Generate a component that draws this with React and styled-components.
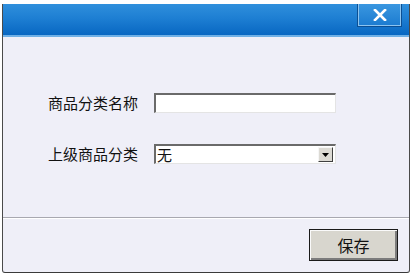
import React from 'react';
import styled, { createGlobalStyle } from 'styled-components';

const GlobalStyle = createGlobalStyle`
  html, body {
    margin: 0;
    padding: 0;
    background: #ffffff;
  }
  body {
    font-family: "Noto Sans CJK SC", "Liberation Sans", sans-serif;
  }
`;

const Page = styled.div`
  padding: 4px 0 0 2px;
`;

const Window = styled.div`
  width: 408px;
  height: 269px;
  display: flex;
  flex-direction: column;
  box-sizing: border-box;
  border-left: 1px solid #4a4a4a;
  border-right: 1px solid #4a4a4a;
  border-bottom: 1px solid #3a3a3a;
  border-radius: 0 0 3px 3px;
  background: #efeff8;
  overflow: hidden;
`;

const TitleBar = styled.div`
  height: 31px;
  flex-shrink: 0;
  display: flex;
  justify-content: flex-end;
  align-items: flex-start;
  padding-right: 7px;
  background: linear-gradient(to bottom, #2f8fdc 0%, #1e7fd3 45%, #0867c2 100%);
  border-bottom: 2px solid #6fb0e6;
`;

const CloseButton = styled.button`
  width: 45px;
  height: 23px;
  padding: 0;
  display: flex;
  align-items: center;
  justify-content: center;
  box-sizing: border-box;
  background: linear-gradient(to bottom, #3a97e0, #1b7bd0);
  border: 1px solid #0b4f93;
  border-top: none;
  box-shadow: inset 1px 0 0 #8cc4f0, inset -1px 0 0 #8cc4f0, inset 0 -1px 0 #8cc4f0;
`;

const Content = styled.div`
  flex: 1;
  display: flex;
  flex-direction: column;
  gap: 31px;
  padding: 56px 0 0 45px;
`;

const Row = styled.div`
  display: flex;
  align-items: center;
`;

const Label = styled.span`
  width: 106px;
  font-size: 15px;
  line-height: 20px;
  color: #111;
`;

const TextBox = styled.input`
  width: 182px;
  height: 20px;
  box-sizing: border-box;
  margin: 0;
  padding: 0 3px;
  background: #fff;
  border-top: 2px solid #6a6a6a;
  border-left: 2px solid #6a6a6a;
  border-right: 1px solid #e4e4e4;
  border-bottom: 1px solid #e4e4e4;
  outline: none;
  font-family: inherit;
  font-size: 15px;
`;

const Select = styled.div`
  width: 182px;
  height: 20px;
  box-sizing: border-box;
  display: flex;
  align-items: center;
  justify-content: space-between;
  background: #fff;
  border-top: 2px solid #6a6a6a;
  border-left: 2px solid #6a6a6a;
  border-right: 1px solid #e4e4e4;
  border-bottom: 1px solid #e4e4e4;
  font-size: 15px;
  color: #111;
  padding-left: 1px;
`;

const ArrowButton = styled.span`
  width: 15px;
  height: 15px;
  margin-right: 2px;
  box-sizing: border-box;
  display: flex;
  align-items: center;
  justify-content: center;
  background: #dcdad4;
  border-top: 1px solid #f6f6f6;
  border-left: 1px solid #f6f6f6;
  border-right: 1px solid #404040;
  border-bottom: 1px solid #404040;
`;

const Footer = styled.div`
  height: 55px;
  flex-shrink: 0;
  display: flex;
  justify-content: flex-end;
  align-items: flex-start;
  padding: 11px 11px 0 0;
  box-sizing: border-box;
  border-top: 1px solid #a8a8b0;
  box-shadow: inset 0 1px 0 #ffffff;
`;

const SaveButton = styled.button`
  width: 89px;
  height: 32px;
  box-sizing: border-box;
  background: #d8d6ce;
  border: 1px solid #1a1a1a;
  box-shadow: inset 1px 1px 0 #fafafa, inset -2px -2px 0 #7c7c7c;
  font-family: inherit;
  font-size: 16px;
  color: #111;
  padding: 0;
`;

const App = () => {
  return (
    <Page>
      <GlobalStyle />
      <Window>
        <TitleBar>
          <CloseButton>
            <svg width="14" height="12" viewBox="0 0 14 12">
              <path d="M2 1 L12 11 M12 1 L2 11" stroke="#fff" strokeWidth="2.6" strokeLinecap="square" />
            </svg>
          </CloseButton>
        </TitleBar>
        <Content>
          <Row>
            <Label>商品分类名称</Label>
            <TextBox defaultValue="" />
          </Row>
          <Row>
            <Label>上级商品分类</Label>
            <Select>
              <span>无</span>
              <ArrowButton>
                <svg width="7" height="4" viewBox="0 0 7 4">
                  <path d="M0 0 H7 L3.5 4 Z" fill="#000" />
                </svg>
              </ArrowButton>
            </Select>
          </Row>
        </Content>
        <Footer>
          <SaveButton>保存</SaveButton>
        </Footer>
      </Window>
    </Page>
  );
};

export default App;
